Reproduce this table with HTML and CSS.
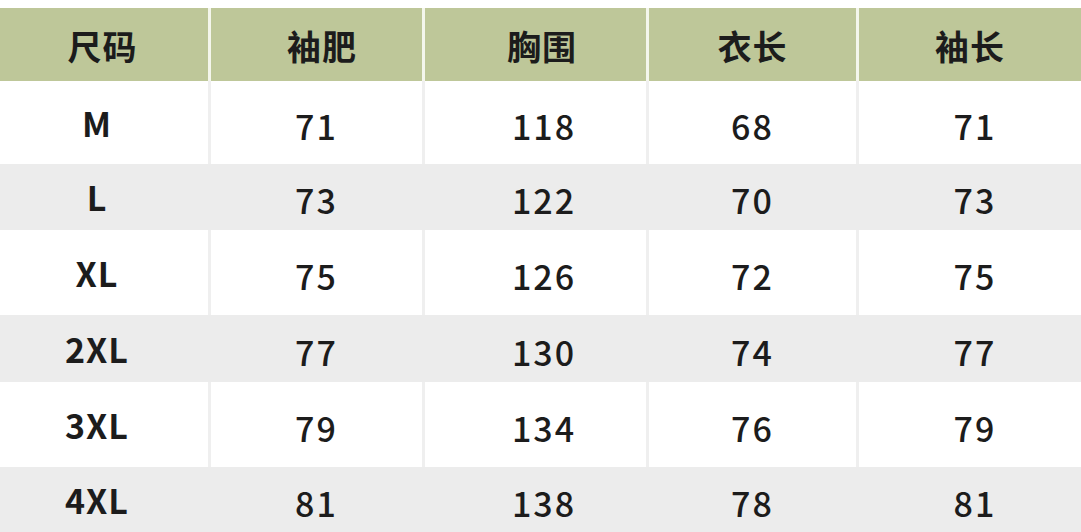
FILE: index.html
```html
<!DOCTYPE html>
<html lang="zh-CN">
<head>
<meta charset="utf-8">
<title>尺码表</title>
<link rel="stylesheet" href="styles.css">
</head>
<body>
<div class="table">
  <div class="row head">
    <div class="cell c1">尺码</div>
    <div class="cell c2">袖肥</div>
    <div class="cell c3">胸围</div>
    <div class="cell c4">衣长</div>
    <div class="cell c5">袖长</div>
  </div>
  <div class="row light tall">
    <div class="cell c1 size">M</div>
    <div class="cell c2 num">71</div>
    <div class="cell c3 num">118</div>
    <div class="cell c4 num">68</div>
    <div class="cell c5 num">71</div>
  </div>
  <div class="row shade short">
    <div class="cell c1 size">L</div>
    <div class="cell c2 num">73</div>
    <div class="cell c3 num">122</div>
    <div class="cell c4 num">70</div>
    <div class="cell c5 num">73</div>
  </div>
  <div class="row light tall2">
    <div class="cell c1 size">XL</div>
    <div class="cell c2 num">75</div>
    <div class="cell c3 num">126</div>
    <div class="cell c4 num">72</div>
    <div class="cell c5 num">75</div>
  </div>
  <div class="row shade short2">
    <div class="cell c1 size">2XL</div>
    <div class="cell c2 num">77</div>
    <div class="cell c3 num">130</div>
    <div class="cell c4 num">74</div>
    <div class="cell c5 num">77</div>
  </div>
  <div class="row light tall2">
    <div class="cell c1 size">3XL</div>
    <div class="cell c2 num">79</div>
    <div class="cell c3 num">134</div>
    <div class="cell c4 num">76</div>
    <div class="cell c5 num">79</div>
  </div>
  <div class="row shade last">
    <div class="cell c1 size">4XL</div>
    <div class="cell c2 num">81</div>
    <div class="cell c3 num">138</div>
    <div class="cell c4 num">78</div>
    <div class="cell c5 num">81</div>
  </div>
</div>
</body>
</html>
```
FILE: styles.css
```css
html, body {
  margin: 0;
  padding: 0;
  background: #ffffff;
  overflow: hidden;
}

body {
  font-family: "Noto Sans CJK SC", "Noto Sans", sans-serif;
  color: #1c1c1c;
  padding-top: 8px;
}

.table {
  width: 1081px;
}

.row {
  display: grid;
  grid-template-columns: 208px 211px 221px 207px 1fr;
  column-gap: 3px;
}

.cell {
  display: flex;
  align-items: center;
  justify-content: center;
  font-size: 34px;
  line-height: 1;
}

.head {
  height: 73px;
  background: #f4f6ec;
}
.head .cell {
  background: #bec799;
  font-weight: 700;
  letter-spacing: 1px;
  padding-top: 3px;
}

.light {
  background: #efefef;
}
.light .cell {
  background: #ffffff;
}

.shade {
  background: #ececec;
}
.shade .cell {
  background: #ececec;
}

.tall { height: 83px; }
.short { height: 66px; }
.tall2 { height: 85px; }
.short2 { height: 67px; }
.last { height: 65px; }

.size {
  font-weight: 700;
  letter-spacing: 1px;
  padding-right: 14px;
}

.num {
  font-weight: 500;
  letter-spacing: 2px;
  padding-top: 6px;
}

.head .c1 { padding-right: 3px; }
.head .c2 { padding-left: 11px; }
.head .c3 { padding-left: 13px; }

.num.c3 { padding-left: 17px; }
.num.c5 { padding-left: 10px; }
```
